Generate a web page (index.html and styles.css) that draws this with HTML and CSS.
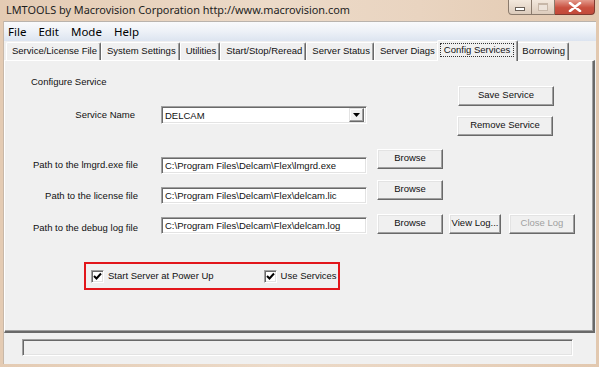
FILE: index.html
```html
<!DOCTYPE html>
<html>
<head>
<meta charset="utf-8">
<link rel="stylesheet" href="styles.css">
</head>
<body>
<div class="window">
  <div class="titlebar">
    <span class="title">LMTOOLS by Macrovision Corporation http://www.macrovision.com</span>
    <div class="caption-btns">
      <div class="cbtn cmin"><span class="min-glyph"></span></div>
      <div class="cbtn cmax"><span class="max-glyph"></span></div>
      <div class="cbtn cclose">
        <svg width="14" height="10" viewBox="0 0 14 10"><path d="M2 1 L12 9 M12 1 L2 9" stroke="#fff" stroke-width="2.6" stroke-linecap="round"/></svg>
      </div>
    </div>
  </div>
  <div class="client">
    <div class="menubar">
      <span class="menu-item">File</span>
      <span class="menu-item">Edit</span>
      <span class="menu-item">Mode</span>
      <span class="menu-item">Help</span>
    </div>
    <div class="tabstrip">
      <div class="tab">Service/License File</div>
      <div class="tab">System Settings</div>
      <div class="tab">Utilities</div>
      <div class="tab">Start/Stop/Reread</div>
      <div class="tab">Server Status</div>
      <div class="tab">Server Diags</div>
      <div class="tab tab-active"><span class="focus">Config Services</span></div>
      <div class="tab">Borrowing</div>
    </div>
    <div class="panel">
      <div class="head">
        <div class="head-left">
          <div class="section-label">Configure Service</div>
          <div class="svc-row">
            <span class="lbl lbl-svc">Service Name</span>
            <div class="combo">
              <span class="combo-text">DELCAM</span>
              <span class="combo-btn"><svg width="7" height="4" viewBox="0 0 7 4"><path d="M0 0 H7 L3.5 4 Z" fill="#000"/></svg></span>
            </div>
          </div>
        </div>
        <div class="head-right">
          <div class="btn btn-save">Save Service</div>
          <div class="btn btn-remove">Remove Service</div>
        </div>
      </div>
      <div class="path-row row1">
        <span class="lbl">Path to the lmgrd.exe file</span>
        <div class="field">C:\Program Files\Delcam\Flex\lmgrd.exe</div>
        <div class="btn btn-browse">Browse</div>
      </div>
      <div class="path-row row2">
        <span class="lbl">Path to the license file</span>
        <div class="field">C:\Program Files\Delcam\Flex\delcam.lic</div>
        <div class="btn btn-browse">Browse</div>
      </div>
      <div class="path-row row3">
        <span class="lbl">Path to the debug log file</span>
        <div class="field">C:\Program Files\Delcam\Flex\delcam.log</div>
        <div class="btn btn-browse">Browse</div>
        <div class="btn btn-view">View Log...</div>
        <div class="btn btn-close disabled">Close Log</div>
      </div>
      <div class="checks">
        <label class="check check-power">
          <span class="box"><svg width="9" height="9" viewBox="0 0 9 9"><path d="M1 4 L3.5 6.5 L8 1.5" fill="none" stroke="#000" stroke-width="2"/></svg></span>
          <span class="check-text">Start Server at Power Up</span>
        </label>
        <label class="check check-svc">
          <span class="box"><svg width="9" height="9" viewBox="0 0 9 9"><path d="M1 4 L3.5 6.5 L8 1.5" fill="none" stroke="#000" stroke-width="2"/></svg></span>
          <span class="check-text">Use Services</span>
        </label>
      </div>
    </div>
    <div class="statusarea">
      <div class="statusbox"></div>
    </div>
  </div>
</div>
</body>
</html>
```

FILE: styles.css
```css
* { box-sizing: border-box; }
html, body { margin: 0; padding: 0; }
body {
  width: 599px;
  height: 367px;
  overflow: hidden;
  background: #e6cfb9;
}
.window {
  width: 599px;
  height: 367px;
  display: flex;
  flex-direction: column;
  background: linear-gradient(to right, #e4cbb3 0%, #ecdac8 45%, #e9d4c0 70%, #e2c8af 100%);
}
.titlebar {
  height: 21px;
  display: flex;
  align-items: flex-start;
  flex-shrink: 0;
}
.title {
  font-family: "Noto Sans", sans-serif;
  font-size: 10.9px;
  line-height: 20px;
  padding-left: 6px;
  color: #1e1e1e;
  white-space: nowrap;
}
.caption-btns {
  margin-left: auto;
  margin-right: 4px;
  display: flex;
  height: 15px;
}
.cbtn {
  height: 15px;
  border: 1px solid #8a7a6c;
  border-top: none;
  display: flex;
  align-items: center;
  justify-content: center;
}
.cmin {
  width: 24px;
  border-radius: 0 0 0 4px;
  background: linear-gradient(#f3e8dd, #dccbbb);
}
.cmax {
  width: 23px;
  border-left: none;
  background: linear-gradient(#f3e8dd, #dccbbb);
}
.cclose {
  width: 40px;
  border-left: none;
  border-radius: 0 0 4px 0;
  background: linear-gradient(#e39a8c, #c9503f 55%, #c24a3a);
  border-color: #7f3a30;
}
.min-glyph {
  width: 10px;
  height: 4px;
  margin-top: 3px;
  border: 1px solid #6a6058;
  background: #fff;
}
.max-glyph {
  width: 10px;
  height: 8px;
  border: 1px solid #c7b7a8;
  border-top-width: 2px;
  background: #ede3da;
}
.client {
  flex: 1;
  margin: 0 3px 3px 3px;
  background: #f0f0f0;
  border-left: 1px solid #c8b8a8;
  display: flex;
  flex-direction: column;
}
.menubar {
  height: 20px;
  flex-shrink: 0;
  display: flex;
  align-items: center;
  padding-left: 4px;
  background: linear-gradient(#f9fafc, #edf1f7 50%, #dce4f0);
  border-top: 1px solid #b9b3ad;
  font-family: "Noto Sans", sans-serif;
  font-size: 11.5px;
  color: #000;
}
.menu-item {
  margin-right: 12px;
}
.tabstrip {
  height: 19px;
  flex-shrink: 0;
  display: flex;
  align-items: flex-end;
  padding-left: 2px;
  font-family: "Liberation Sans", Arial, sans-serif;
  font-size: 9.5px;
  color: #111;
}
.tab {
  height: 18px;
  line-height: 16px;
  padding: 0 3px 0 5px;
  border-top: 1px solid #fff;
  border-left: 1px solid #fff;
  border-right: 1px solid #696969;
  box-shadow: inset -1px 0 0 #a0a0a0;
  border-radius: 2px 2px 0 0;
  white-space: nowrap;
}
.tab-active {
  height: 21px;
  margin: 0 -2px -1px -2px;
  padding: 0 4px 0 3px;
  line-height: 17px;
  background: #f0f0f0;
  position: relative;
  z-index: 1;
}
.focus {
  display: inline-block;
  outline: 1px dotted #333;
  line-height: 12px;
  padding: 0 3px;
  margin-top: 2px;
}
.panel {
  height: 273px;
  flex-shrink: 0;
  margin: 0 1px 0 0;
  border-top: 1px solid #fff;
  border-left: 1px solid #fff;
  border-right: 2px solid #696969;
  border-bottom: 2px solid #696969;
  box-shadow: inset -1px -1px 0 #a0a0a0;
  font-family: "Liberation Sans", Arial, sans-serif;
  font-size: 9.5px;
  color: #111;
  display: flex;
  flex-direction: column;
}
.head {
  height: 76px;
  display: flex;
}
.head-left {
  display: flex;
  flex-direction: column;
}
.section-label {
  margin: 15px 0 0 26px;
  line-height: 12px;
}
.svc-row {
  margin-top: 18px;
  display: flex;
  align-items: center;
}
.lbl {
  width: 133px;
  text-align: right;
  line-height: 12px;
  white-space: nowrap;
}
.lbl-svc {
  width: 130px;
}
.combo {
  margin-left: 26px;
  width: 206px;
  height: 18px;
  background: #fff;
  border-top: 1px solid #a0a0a0;
  border-left: 1px solid #a0a0a0;
  border-right: 1px solid #fff;
  border-bottom: 1px solid #fff;
  box-shadow: inset 1px 1px 0 #696969, inset -1px -1px 0 #e3e3e3;
  display: flex;
  align-items: center;
  padding: 1px 2px 1px 2px;
}
.combo-text {
  flex: 1;
  font-size: 9.5px;
  padding-left: 1px;
}
.combo-btn {
  width: 15px;
  height: 14px;
  background: #f0f0f0;
  border-top: 1px solid #e3e3e3;
  border-left: 1px solid #e3e3e3;
  border-right: 1px solid #696969;
  border-bottom: 1px solid #696969;
  box-shadow: inset -1px -1px 0 #a0a0a0, inset 1px 1px 0 #fff;
  display: flex;
  align-items: center;
  justify-content: center;
}
.head-right {
  margin-left: auto;
  margin-right: 39px;
  margin-top: 25px;
  display: flex;
  flex-direction: column;
  gap: 10px;
}
.btn {
  height: 20px;
  background: #f0f0f0;
  border-top: 1px solid #fff;
  border-left: 1px solid #fff;
  border-right: 1px solid #696969;
  border-bottom: 1px solid #696969;
  box-shadow: inset -1px -1px 0 #a0a0a0, inset 1px 1px 0 #e3e3e3;
  display: flex;
  align-items: center;
  justify-content: center;
  white-space: nowrap;
  line-height: 12px;
  padding-bottom: 2px;
}
.btn-save { width: 96px; }
.btn-remove { width: 96px; margin-left: -1px; }
.path-row {
  display: flex;
  align-items: flex-start;
}
.field {
  margin-left: 23px;
  width: 206px;
  height: 17px;
  background: #fff;
  border-top: 1px solid #a0a0a0;
  border-left: 1px solid #a0a0a0;
  border-right: 1px solid #fff;
  border-bottom: 1px solid #fff;
  box-shadow: inset 1px 1px 0 #696969, inset -1px -1px 0 #e3e3e3;
  padding: 2px 0 0 3px;
  line-height: 12px;
  white-space: nowrap;
  overflow: hidden;
}
.btn-browse { width: 66px; margin-left: 10px; }
.btn-view { width: 52px; margin-left: 6px; }
.btn-close { width: 66px; margin-left: 8px; }
.disabled { color: #a0a0a0; }
.row1 { height: 39px; }
.row1 .lbl { margin-top: 22px; }
.row1 .field { margin-top: 20px; }
.row1 .btn { margin-top: 12px; }
.row2 { height: 30px; }
.row2 .lbl { margin-top: 14px; }
.row2 .field { margin-top: 11px; }
.row2 .btn { margin-top: 4px; }
.row3 { height: 31px; }
.row3 .lbl { margin-top: 16px; }
.row3 .field { margin-top: 11px; }
.row3 .btn { margin-top: 8px; }
.checks {
  margin: 25px 0 0 79px;
  width: 256px;
  height: 28px;
  border: 2px solid #e2161b;
  display: flex;
  align-items: center;
  padding-left: 5px;
}
.check {
  display: flex;
  align-items: center;
}
.check-svc { margin-left: 50px; }
.box {
  width: 13px;
  height: 13px;
  background: #fff;
  border-top: 1px solid #a0a0a0;
  border-left: 1px solid #a0a0a0;
  border-right: 1px solid #fff;
  border-bottom: 1px solid #fff;
  box-shadow: inset 1px 1px 0 #696969, inset -1px -1px 0 #e3e3e3;
  display: flex;
  align-items: center;
  justify-content: center;
}
.check-text {
  margin-left: 4px;
  line-height: 12px;
}
.statusarea {
  flex: 1;
  padding: 6px 0 0 18px;
}
.statusbox {
  width: 551px;
  height: 17px;
  border-top: 1px solid #a0a0a0;
  border-left: 1px solid #a0a0a0;
  border-right: 1px solid #fff;
  border-bottom: 1px solid #fff;
  box-shadow: inset 1px 1px 0 #696969, inset -1px -1px 0 #e3e3e3;
}
```
